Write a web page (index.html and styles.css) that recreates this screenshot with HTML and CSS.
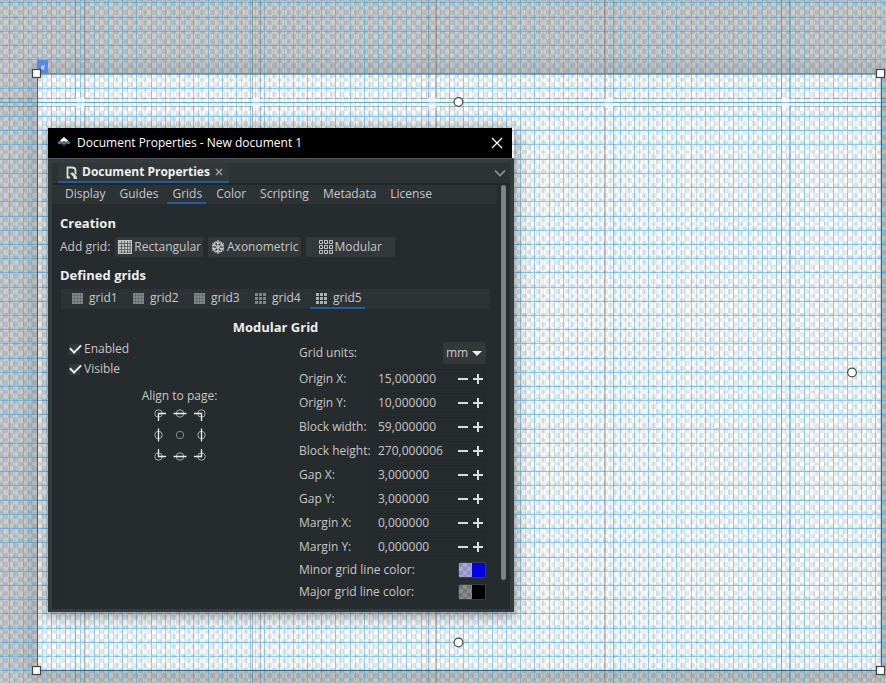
FILE: index.html
```html
<!DOCTYPE html>
<html lang="en">
<head>
<meta charset="utf-8">
<title>Document Properties - New document 1</title>
<link rel="stylesheet" href="styles.css">
</head>
<body>
<main class="canvas">
  <svg class="drawing" aria-hidden="true">
    <defs>
      <filter id="soft" x="-10%" y="-10%" width="120%" height="120%"><feGaussianBlur stdDeviation="5"/></filter>
    </defs>
    <path id="checker" fill="#e8e8e8" shape-rendering="crispEdges"/>
    <path d="M0 0h2000v2000H0zM37 73v598h845V73z" fill="#000" fill-rule="evenodd" opacity=".2"/>
    <path d="M28 64h863v616H28zM37 73v598h845V73z" fill="#000" fill-rule="evenodd" opacity=".1" filter="url(#soft)"/>
    <g fill="#38a9e0" shape-rendering="crispEdges">
      <path id="wide" opacity=".15"/>
      <path id="light" opacity=".3"/>
      <path id="minor" opacity=".55"/>
    </g>
    <g fill="#fff" opacity=".4">
      <path d="M77 99h7v572h-7zM253 99h7v572h-7zM429 99h7v572h-7zM605 99h7v572h-7zM782 99h7v572h-7z" opacity=".3"/>
      <path d="M37 99h844v7H37z"/>
    </g>
    <path d="M0 102.500h886" stroke="#38a9e0" opacity=".7"/>
    <path d="M77 98h7v10h-7zM253 98h7v10h-7zM429 98h7v10h-7zM605 98h7v10h-7zM782 98h7v10h-7z" fill="#fff" opacity=".35"/>
    <g fill="none" stroke="#555" opacity=".38">
      <rect x="-91.500" y="-20.500" width="167" height="119"/><rect x="84.500" y="-20.500" width="168" height="119"/><rect x="260.500" y="-20.500" width="168" height="119"/><rect x="436.500" y="-20.500" width="168" height="119"/><rect x="613.500" y="-20.500" width="168" height="119"/><rect x="789.500" y="-20.500" width="168" height="119"/>
      <rect x="-91.500" y="106.500" width="167" height="767"/><rect x="84.500" y="106.500" width="168" height="767"/><rect x="260.500" y="106.500" width="168" height="767"/><rect x="436.500" y="106.500" width="168" height="767"/><rect x="613.500" y="106.500" width="168" height="767"/><rect x="789.500" y="106.500" width="168" height="767"/>
    </g>
    <path d="M37.500 74h844v596.500h-844z" fill="none" stroke="#286d8e"/>
    <rect x="37" y="60" width="11" height="14" fill="#5689e4"/>
    <path d="M41 66l4-1-1 5-3-1z" fill="#b6cbf5"/>
    <g fill="#fff" stroke="#444" stroke-width="1.200">
      <rect x="32.500" y="69.500" width="8" height="8"/><rect x="876.500" y="69.500" width="8" height="8"/><rect x="32.500" y="666.500" width="8" height="8"/><rect x="876.500" y="666.500" width="8" height="8"/>
      <circle cx="458.500" cy="102" r="4.400"/><circle cx="852" cy="372.500" r="4.400"/><circle cx="458.500" cy="642.500" r="4.400"/>
    </g>
  </svg>

  <section class="dialog" aria-label="Document Properties">
    <header class="titlebar">
      <svg class="logo" viewBox="0 0 14 12" aria-hidden="true"><path d="M7 0l6 5q1.500 2-1.500 2.500l-2 1.500-2.500 1.500L4.500 9l-2-1.500Q-.5 7 1 5z" fill="#10151f"/><path d="M7 0l4.500 4-2.500 1-2-1-2 1-2.500-1z" fill="#fff"/><path d="M1 5l2.500-1.500L5 5l2-1 2 1 2-1 2 1q1 2-2 2L9 6.500 7 8 5 6.500 2.500 7Q0 7 1 5z" fill="#5a7095"/></svg>
      <h1 class="title">Document Properties - New document 1</h1>
      <button class="close" aria-label="Close"><svg viewBox="0 0 12 12"><path d="M1 1l10 10M11 1L1 11" stroke="#fff" stroke-width="1.300"/></svg></button>
    </header>
    <div class="frame">
      <div class="dock">
        <div class="docktab">
          <svg class="docicon" viewBox="0 0 11 13" aria-hidden="true"><path d="M4 11.500H1.500v-10H6q3.500 0 3.500 3v4" fill="none" stroke="#ddd" stroke-width="1.800"/><path d="M4 7l3-.5L11 11v2H8l-1-2.500z" fill="#ddd"/></svg>
          <span>Document Properties</span>
          <button class="tabclose" aria-label="Close tab"><svg viewBox="0 0 8 8"><path d="M1 1l6 6M7 1L1 7" stroke="#9a9d9e" stroke-width="1.500"/></svg></button>
        </div>
        <button class="chevron" aria-label="More"><svg viewBox="0 0 12 8"><path d="M1 1.500l5 5 5-5" fill="none" stroke="#8f9394" stroke-width="1.700"/></svg></button>
      </div>
      <div class="scroller">
        <div class="content">
          <nav class="pages">
            <button>Display</button><button>Guides</button><button class="on">Grids</button><button>Color</button><button>Scripting</button><button>Metadata</button><button>License</button>
          </nav>
          <div class="body">
            <h2>Creation</h2>
            <div class="addrow">
              <span>Add grid:</span>
              <button class="btn"><svg viewBox="0 0 14 14"><path d="M0 0h14v14H0z" fill="#c2c4c4"/><path d="M3.500 1v12M6.500 1v12M9.500 1v12M12.200 1v12M1 3.500h12M1 6.500h12M1 9.500h12M1 12.200h12" stroke="#33393b" stroke-width=".6"/></svg>Rectangular</button>
              <button class="btn"><svg viewBox="0 0 14 14"><path d="M7 0v14M1 3.500l12 7M13 3.500l-12 7M4.500 1.500L7 4l2.500-2.500M4.500 12.500L7 10l2.500 2.500M1 6l3-.5L3.500 2M13 6l-3-.5.5-3.500M1 8l3 .5-.5 3.500M13 8l-3 .5.5 3.500" fill="none" stroke="#c5c7c7" stroke-width="1.300"/></svg>Axonometric</button>
              <button class="btn wide"><svg viewBox="0 0 14 14"><path d="M.5.5h3v3h-3zM5.500.5h3v3h-3zM10.500.5h3v3h-3zM.5 5.500h3v3h-3zM5.500 5.500h3v3h-3zM10.500 5.500h3v3h-3zM.5 10.500h3v3h-3zM5.500 10.500h3v3h-3zM10.500 10.500h3v3h-3z" fill="none" stroke="#c5c7c7"/></svg>Modular</button>
            </div>
            <h2>Defined grids</h2>
            <div class="gridtabs">
              <button><svg viewBox="0 0 11 11"><path d="M0 0h11v11H0z" fill="#858889"/><path d="M2.500 0v11M5.500 0v11M8.500 0v11M0 2.500h11M0 5.500h11M0 8.500h11" stroke="#565b5d" stroke-width=".5"/></svg>grid1</button>
              <button><svg viewBox="0 0 11 11"><path d="M0 0h11v11H0z" fill="#858889"/><path d="M2.500 0v11M5.500 0v11M8.500 0v11M0 2.500h11M0 5.500h11M0 8.500h11" stroke="#565b5d" stroke-width=".5"/></svg>grid2</button>
              <button><svg viewBox="0 0 11 11"><path d="M0 0h11v11H0z" fill="#858889"/><path d="M2.500 0v11M5.500 0v11M8.500 0v11M0 2.500h11M0 5.500h11M0 8.500h11" stroke="#565b5d" stroke-width=".5"/></svg>grid3</button>
              <button><svg viewBox="0 0 11 11"><path d="M0 0h3v3H0zM4 0h3v3H4zM8 0h3v3H8zM0 4h3v3H0zM4 4h3v3H4zM8 4h3v3H8zM0 8h3v3H0zM4 8h3v3H4zM8 8h3v3H8z" fill="#828586"/></svg>grid4</button>
              <button class="on"><svg viewBox="0 0 11 11"><path d="M0 0h3v3H0zM4 0h3v3H4zM8 0h3v3H8zM0 4h3v3H0zM4 4h3v3H4zM8 4h3v3H8zM0 8h3v3H0zM4 8h3v3H4zM8 8h3v3H8z" fill="#aeb0b0"/></svg>grid5</button>
            </div>
            <div class="panel">
              <h3>Modular Grid</h3>
              <div class="columns">
                <div class="left">
                  <label class="check"><input type="checkbox" checked>Enabled</label>
                  <label class="check"><input type="checkbox" checked>Visible</label>
                  <div class="align">
                    <span>Align to page:</span>
                    <svg class="anchors" viewBox="0 0 56 56" role="img" aria-label="Page anchors">
                      <g fill="none" stroke="#a9acac"><circle cx="6.500" cy="6.500" r="3.700"/><circle cx="28" cy="6.500" r="3.700"/><circle cx="49.500" cy="6.500" r="3.700"/><circle cx="6.500" cy="28" r="3.700"/><circle cx="28" cy="28" r="3.700" stroke="#85898a"/><circle cx="49.500" cy="28" r="3.700"/><circle cx="6.500" cy="49.500" r="3.700"/><circle cx="28" cy="49.500" r="3.700"/><circle cx="49.500" cy="49.500" r="3.700"/></g>
                      <path d="M6.500 14V6.500H14M21.500 6.500h13M42 6.500h7.500V14M6.500 21.500v13M49.500 21.500v13M6.500 42v7.500H14M21.500 49.500h13M42 49.500h7.500V42" fill="none" stroke="#eee" stroke-width="1.300"/>
                    </svg>
                  </div>
                </div>
                <div class="right">
                  <div class="row units"><label for="u">Grid units:</label><span class="pick"><select id="u"><option>mm</option></select><svg viewBox="0 0 10 5" aria-hidden="true"><path d="M0 0h10L5 5z" fill="#eee"/></svg></span></div>
                  <div class="row"><label for="ox">Origin X:</label><span class="spin"><input id="ox" value="15,000000"><button aria-label="Decrease" class="minus"></button><button aria-label="Increase" class="plus"></button></span></div>
                  <div class="row"><label for="oy">Origin Y:</label><span class="spin"><input id="oy" value="10,000000"><button aria-label="Decrease" class="minus"></button><button aria-label="Increase" class="plus"></button></span></div>
                  <div class="row"><label for="bw">Block width:</label><span class="spin"><input id="bw" value="59,000000"><button aria-label="Decrease" class="minus"></button><button aria-label="Increase" class="plus"></button></span></div>
                  <div class="row"><label for="bh">Block height:</label><span class="spin"><input id="bh" value="270,000006"><button aria-label="Decrease" class="minus"></button><button aria-label="Increase" class="plus"></button></span></div>
                  <div class="row"><label for="gx">Gap X:</label><span class="spin"><input id="gx" value="3,000000"><button aria-label="Decrease" class="minus"></button><button aria-label="Increase" class="plus"></button></span></div>
                  <div class="row"><label for="gy">Gap Y:</label><span class="spin"><input id="gy" value="3,000000"><button aria-label="Decrease" class="minus"></button><button aria-label="Increase" class="plus"></button></span></div>
                  <div class="row"><label for="mx">Margin X:</label><span class="spin"><input id="mx" value="0,000000"><button aria-label="Decrease" class="minus"></button><button aria-label="Increase" class="plus"></button></span></div>
                  <div class="row"><label for="my">Margin Y:</label><span class="spin"><input id="my" value="0,000000"><button aria-label="Decrease" class="minus"></button><button aria-label="Increase" class="plus"></button></span></div>
                  <div class="row color"><label for="c1">Minor grid line color:</label><button id="c1" class="swatch blue"></button></div>
                  <div class="row color"><label for="c2">Major grid line color:</label><button id="c2" class="swatch black"></button></div>
                </div>
              </div>
            </div>
          </div>
        </div>
        <div class="scrollbar"><div class="thumb"></div></div>
      </div>
    </div>
  </section>
</main>
<script src="canvas.js"></script>
</body>
</html>
```
FILE: canvas.js
```js
const width = window.innerWidth;
const height = window.innerHeight;
const box = (x, y, w, h) => `M${x} ${y}h${w}v${h}h${-w}z`;

// Transparency checkerboard
const cell = 4.8;
const edge = (n, shift) => Math.round(n * cell + shift);
let checker = '';
for (let r = -2; r * cell < height; r++) {
  for (let c = -2 + (r & 1); c * cell < width + cell; c += 2) {
    const x = edge(c, -1.4), y = edge(r, 0.8);
    checker += box(x, y, edge(c + 1, -1.4) - x, edge(r + 1, 0.8) - y);
  }
}
document.getElementById('checker').setAttribute('d', checker);

// 5 mm grid aligned to the page corner, with its fainter companions
const step = 14.21;
let minor = '', light = '', wide = '';
for (let i = -6; 37.5 + i * step < width; i++) {
  const x = Math.floor(37.5 + i * step);
  minor += box(x, 0, 1, height);
  light += box(x + 5, 0, 1, height);
  wide += box(x + 9 - (i & 1), 0, 2, height);
}
for (let i = -6; 73.5 + i * step < height; i++) {
  const y = Math.floor(73.9 + i * step);
  minor += box(0, y, width, 1);
  wide += box(0, y - 1 - (i & 1), width, 2);
}
document.getElementById('minor').setAttribute('d', minor);
document.getElementById('light').setAttribute('d', light);
document.getElementById('wide').setAttribute('d', wide);
```
FILE: styles.css
```css
* { box-sizing: border-box; }
body { margin: 0; font: 12px/16px "Open Sans", "Noto Sans", sans-serif; color: #c6c8c8; }
button, input, select { font: inherit; color: inherit; border: 0; margin: 0; padding: 0; background: none; }
svg { display: block; flex: none; }
h1, h2, h3 { margin: 0; font-size: 13px; line-height: 18px; color: #eee; }

.canvas { position: relative; height: 100vh; overflow: hidden; background: #fff; }
.drawing { width: 100%; height: 100%; }

.dialog { position: absolute; left: 48px; top: 128px; width: 466px; box-shadow: 0 2px 14px 2px rgba(0, 0, 0, .4); }
.titlebar { display: flex; align-items: center; height: 30px; margin-right: 2px; padding: 0 9px; background: #000; }
.logo { width: 14px; height: 12px; margin-right: 6px; }
.title { flex: 1; font-size: 12px; font-weight: 400; color: #fff; }
.close svg { width: 12px; height: 12px; }

.frame { padding: 4px 4px 3px; background: #353b3e; border-top: 1px solid #50565a; }
.dock { display: flex; justify-content: space-between; align-items: center; height: 20px; padding: 0 4px 0 6px; background: #2d3335; }
.docktab { display: flex; align-items: center; height: 20px; padding: 0 6px 0 8px; gap: 5px; background: #32383a; border-bottom: 2px solid #215d9c; font-weight: 700; color: #eee; }
.docicon { width: 11px; height: 13px; }
.tabclose svg { width: 8px; height: 8px; }
.chevron svg { width: 12px; height: 8px; }

.scroller { display: flex; background: #262b2d; border-top: 2px solid #222729; }
.content { flex: 1; min-width: 0; }
.scrollbar { width: 13px; padding: 0 4px; }
.thumb { width: 5px; height: 395px; border-radius: 3px; background: #7e8283; }

.pages { display: flex; height: 19px; padding-left: 8px; background: #2d3335; }
.pages button { padding: 0 4px 0 5px; margin-right: 5px; border-bottom: 2px solid transparent; }
.pages .on { border-color: #215d9c; }

.body { padding: 10px 7px 6px 8px; }
.addrow { display: flex; align-items: center; gap: 5px; margin: 5px 0 9px; height: 20px; }
.btn { display: flex; align-items: center; gap: 2px; height: 20px; padding: 0 2px 0 3px; border-radius: 2px; background: #33393b; }
.btn svg { width: 14px; height: 14px; }
.wide { padding: 0 13px; }

.gridtabs { display: flex; height: 20px; margin: 5px 0 0 1px; padding-left: 5px; background: #2d3335; }
.gridtabs button { display: flex; align-items: center; gap: 6px; width: 55px; margin-right: 6px; padding-left: 6px; border-bottom: 2px solid transparent; }
.gridtabs .on { border-color: #215d9c; }
.gridtabs svg { width: 11px; height: 11px; }

.panel { padding: 9px 4px 0 8px; border-left: 1px solid #222729; }
.panel h3 { text-align: center; margin-right: 4px; }
.columns { display: flex; justify-content: space-between; padding-top: 3px; }
.left { width: 221px; }
.check { display: flex; align-items: center; gap: 4px; height: 20px; }
.check input { appearance: none; width: 11px; height: 11px; background: #33393b; }
.check input::before { content: ""; display: block; width: 9px; height: 5px; margin: 0 1px; border: solid #eee; border-width: 0 0 2px 2px; transform: rotate(-45deg); }
.align { display: flex; flex-direction: column; align-items: center; gap: 3px; margin-top: 9px; }
.anchors { width: 56px; height: 56px; }

.right { width: 187px; padding-top: 2px; }
.row { display: flex; justify-content: space-between; align-items: center; height: 24px; white-space: nowrap; }
.units { height: 26px; padding-bottom: 2px; }
.pick { display: flex; align-items: center; gap: 3px; width: 43px; height: 22px; padding: 0 4px 0 3px; background: #33393b; border-radius: 2px; }
.pick select { appearance: none; flex: 1; min-width: 0; }
.pick svg { width: 10px; height: 5px; }
.spin { display: flex; width: 114px; height: 20px; border: 1px solid #222729; }
.spin input { flex: 1; min-width: 0; padding-left: 5px; }
.spin button { width: 15px; background: linear-gradient(#ddd, #ddd) center / 10px 2px no-repeat; }
.spin .plus { background: linear-gradient(#ddd, #ddd) center / 10px 2px no-repeat, linear-gradient(#ddd, #ddd) center / 2px 10px no-repeat; }
.color { height: 22px; }
.swatch { width: 28px; height: 16px; border: 1px solid #3a4042; border-radius: 2px; }
.blue { background: linear-gradient(90deg, transparent 50%, #0000e6 50%), repeating-conic-gradient(#a9a9d6 0 25%, #9090c2 0 50%) 0 0 / 8px 8px; }
.black { background: linear-gradient(90deg, transparent 50%, #000 50%), repeating-conic-gradient(#8d8d8d 0 25%, #747474 0 50%) 0 0 / 8px 8px; }
```
